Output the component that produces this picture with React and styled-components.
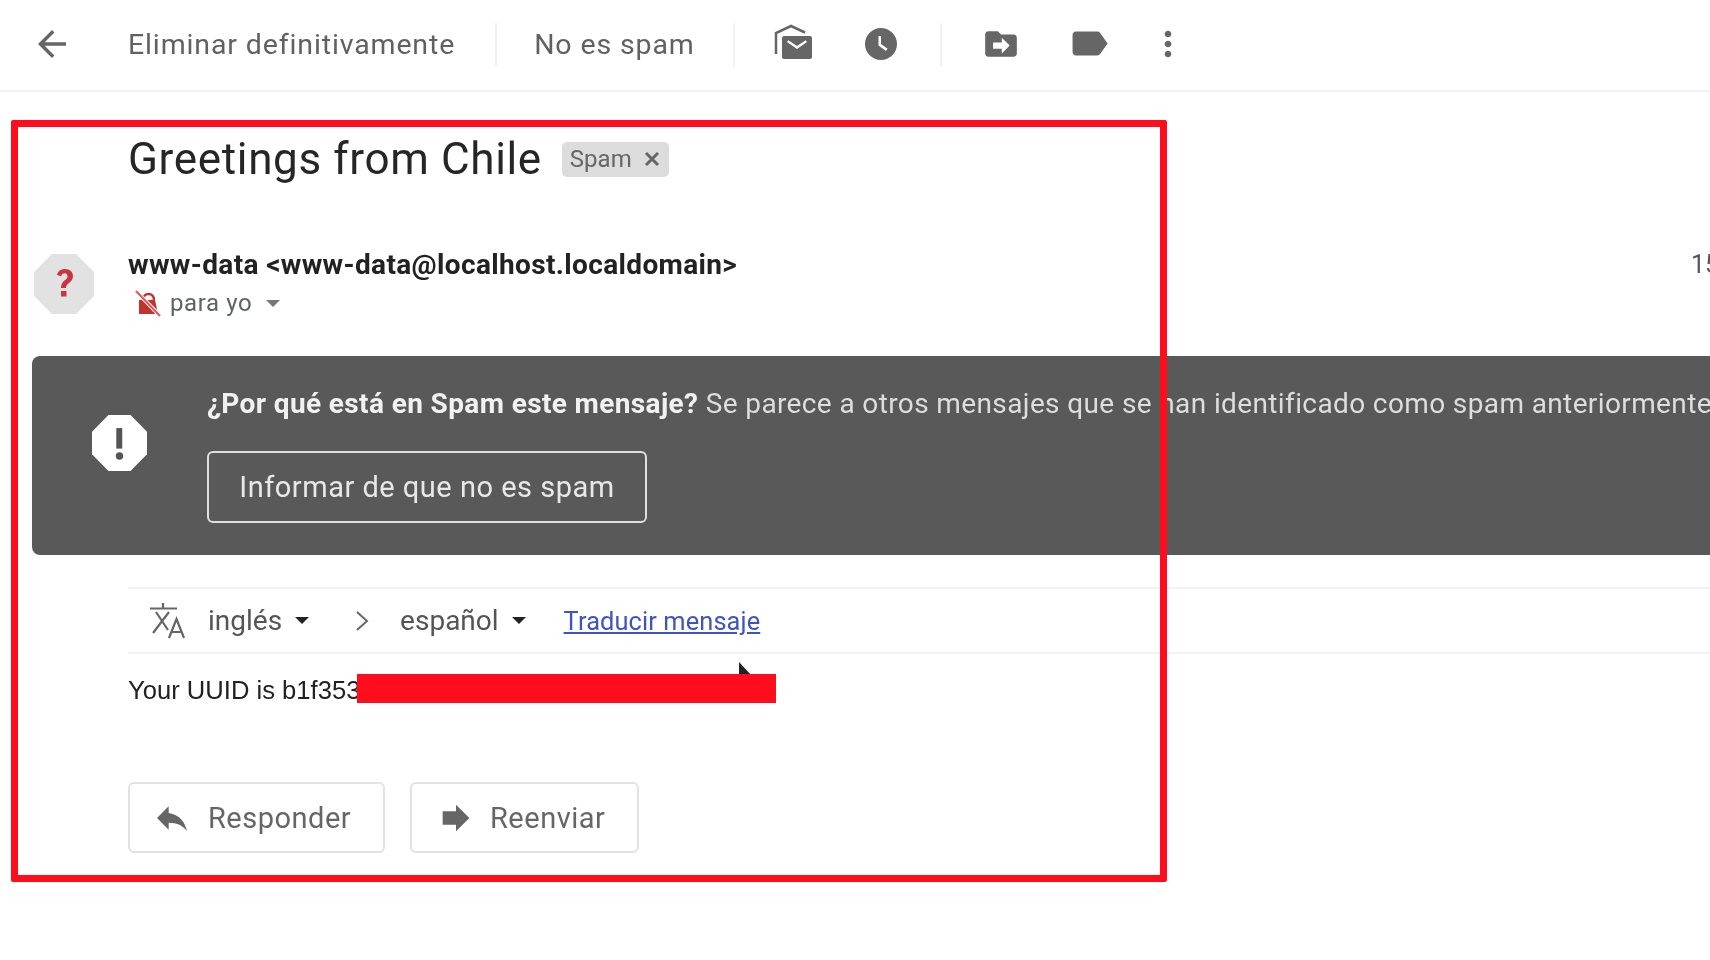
import React from 'react';
import styled, { createGlobalStyle } from 'styled-components';

const GlobalStyle = createGlobalStyle`
  html, body {
    margin: 0;
    padding: 0;
    background: #fff;
    font-family: Roboto, "Liberation Sans", sans-serif;
  }
`;

const Page = styled.div`
  position: relative;
  width: 1710px;
  height: 960px;
  overflow: hidden;
  background: #fff;
`;

const Blurred = styled.div`
  filter: blur(0.7px);
`;

const Toolbar = styled.div`
  display: flex;
  align-items: center;
  height: 90px;
  border-bottom: 2px solid #f1f1f1;
  padding-left: 31px;
  color: #666;
`;

const ToolIcon = styled.svg`
  flex: none;
  width: ${(p) => p.$size}px;
  height: ${(p) => p.$size}px;
  margin-left: ${(p) => p.$ml || 0}px;
  margin-bottom: 3px;
  fill: currentColor;
`;

const ToolText = styled.span`
  margin-left: ${(p) => p.$ml}px;
  margin-bottom: 2px;
  font-size: 28.5px;
  letter-spacing: 0.87px;
  white-space: nowrap;
  color: #616161;
`;

const ToolDivider = styled.span`
  flex: none;
  width: 2px;
  height: 44px;
  margin-left: ${(p) => p.$ml}px;
  background: #f2f2f2;
`;

const SubjectRow = styled.div`
  display: flex;
  align-items: center;
  height: 36px;
  margin-top: 49px;
  padding-left: 128px;
`;

const Subject = styled.h1`
  margin: 0;
  font-size: 44px;
  font-weight: 400;
  letter-spacing: 0.65px;
  color: #262626;
  white-space: nowrap;
`;

const Chip = styled.span`
  display: flex;
  align-items: center;
  height: 35px;
  margin-left: 20px;
  padding: 0 8px;
  gap: 11px;
  background: #dcdcdc;
  border-radius: 5px;
  font-size: 24px;
  color: #666;
`;

const ChipClose = styled.svg`
  width: 18px;
  height: 18px;
  stroke: #666;
  stroke-width: 3;
  fill: none;
`;

const SenderRow = styled.div`
  display: flex;
  margin-top: 69px;
  padding-left: 34px;
  width: 1800px;
`;

const Avatar = styled.svg`
  flex: none;
  width: 60px;
  height: 60px;
  margin-top: 8px;
`;

const SenderInfo = styled.div`
  flex: none;
  width: 1563px;
  margin-left: 34px;
`;

const SenderName = styled.div`
  font-size: 28px;
  line-height: 38px;
  font-weight: 700;
  letter-spacing: 0.36px;
  color: #222;
  white-space: nowrap;
`;

const Recipient = styled.div`
  display: flex;
  align-items: center;
  height: 38px;
  font-size: 24px;
  letter-spacing: 0.6px;
  color: #5f6368;
`;

const BellIcon = styled.svg`
  flex: none;
  width: 27px;
  height: 27px;
  margin: 0 8px 0 7px;
`;

const Caret = styled.span`
  width: 0;
  height: 0;
  margin-left: ${(p) => p.$ml}px;
  border-left: 7.5px solid transparent;
  border-right: 7.5px solid transparent;
  border-top: 7.5px solid ${(p) => p.$color};
`;

const DateText = styled.div`
  font-size: 25px;
  line-height: 38px;
  color: #555;
`;

const Banner = styled.div`
  display: flex;
  box-sizing: border-box;
  width: 1750px;
  height: 199px;
  margin: 34px 0 0 32px;
  padding: 28px 0 0 60px;
  background: #595959;
  border-radius: 8px 0 0 8px;
`;

const BannerBody = styled.div`
  margin-left: 60px;
  margin-top: 2px;
`;

const BannerIcon = styled.svg`
  flex: none;
  width: 55px;
  height: 56px;
  margin-top: 31px;
`;

const BannerText = styled.div`
  font-size: 28px;
  line-height: 36px;
  letter-spacing: 0.38px;
  color: #ddd;
  white-space: nowrap;

  b {
    font-weight: 700;
    color: #f1f1f1;
    letter-spacing: 0.38px;
  }
`;

const OutlineButton = styled.div`
  box-sizing: border-box;
  width: 440px;
  height: 72px;
  margin-top: 29px;
  border: 2px solid #e0e0e0;
  border-radius: 6px;
  font-size: 29px;
  line-height: 68px;
  text-align: center;
  letter-spacing: 0.5px;
  color: #e8e8e8;
`;

const TranslateBar = styled.div`
  display: flex;
  align-items: center;
  box-sizing: border-box;
  height: 67px;
  margin: 32px 0 0 128px;
  padding-left: 22px;
  border-top: 2px solid #f3f3f3;
  border-bottom: 2px solid #f3f3f3;
`;

const TranslateIcon = styled.svg`
  flex: none;
  width: 36px;
  height: 36px;
  fill: none;
  stroke: #666;
  stroke-width: 2.2;
`;

const LangText = styled.span`
  margin-left: ${(p) => p.$ml}px;
  font-size: 28px;
  color: #555;
`;

const Chevron = styled.svg`
  flex: none;
  width: 14px;
  height: 20px;
  margin-left: 46px;
  fill: none;
  stroke: #666;
  stroke-width: 2;
`;

const TranslateLink = styled.a`
  margin-left: 38px;
  font-size: 25.4px;
  letter-spacing: 0.1px;
  color: #3f55bd;
  text-decoration: underline;
`;

const BodyLine = styled.div`
  margin: 18px 0 0 128px;
  height: 36px;
  font-family: "Liberation Sans", Arial, sans-serif;
  font-size: 25.6px;
  line-height: 36px;
  color: #222;
`;

const Actions = styled.div`
  display: flex;
  gap: 25px;
  margin: 74px 0 0 128px;
`;

const ActionButton = styled.div`
  display: flex;
  align-items: center;
  box-sizing: border-box;
  width: ${(p) => p.$width}px;
  height: 71px;
  padding-left: ${(p) => p.$pad}px;
  border: 2px solid #e2e2e2;
  border-radius: 6px;
  font-size: 29px;
  letter-spacing: 0.5px;
  color: #666;
`;

const ActionIcon = styled.svg`
  flex: none;
  width: 40px;
  height: 40px;
  margin-right: ${(p) => p.$mr}px;
  fill: #666;
`;

/* overlays drawn on top of the screenshot */
const RedFrame = styled.div`
  position: absolute;
  left: 11px;
  top: 120px;
  width: 1156px;
  height: 762px;
  box-sizing: border-box;
  border: 7px solid #ff0d1d;
  border-radius: 2px;
`;

const Redaction = styled.div`
  position: absolute;
  left: 357px;
  top: 674px;
  width: 419px;
  height: 29px;
  background: #ff0d1d;
`;

const Cursor = styled.svg`
  position: absolute;
  left: 736px;
  top: 662px;
  width: 18px;
  height: 14px;
  fill: #222;
`;

const octagon = '18,0 42,0 60,18 60,42 42,60 18,60 0,42 0,18';

export default function App() {
  return (
    <Page>
      <GlobalStyle />
      <Blurred>
        <Toolbar>
          <ToolIcon $size={42} viewBox="0 0 24 24">
            <path d="M20 11H7.830l5.590-5.590L12 4l-8 8 8 8 1.410-1.410L7.830 13H20v-2z" />
          </ToolIcon>
          <ToolText $ml={55}>Eliminar definitivamente</ToolText>
          <ToolDivider $ml={40} />
          <ToolText $ml={37}>No es spam</ToolText>
          <ToolDivider $ml={38} />
          <ToolIcon $size={42} $ml={37} viewBox="0 0 42 42">
            <path d="M4 31V10L19 3l14 6.500" fill="none" stroke="currentColor" strokeWidth="2.500" />
            <path fill="#fff" d="M7 12h34v26H7z" />
            <path fillRule="evenodd" d="M12 13h26a2 2 0 0 1 2 2v19a2 2 0 0 1-2 2H12a2 2 0 0 1-2-2V15a2 2 0 0 1 2-2zm3 6 10 7 10-7-1.300-1.800L25 23l-8.700-5.800z" />
          </ToolIcon>
          <ToolIcon $size={34} $ml={50} viewBox="0 0 34 34">
            <path fillRule="evenodd" d="M17 1a16 16 0 1 1 0 32 16 16 0 0 1 0-32zm-2.500 8v9.500l7.500 5.500 1.600-2.200-6.600-4.800V9z" />
          </ToolIcon>
          <ToolDivider $ml={42} />
          <ToolIcon $size={38} $ml={40} viewBox="0 0 24 24">
            <path fillRule="evenodd" d="M20 6h-8l-2-2H4c-1.100 0-2 .9-2 2v12c0 1.100.9 2 2 2h16c1.100 0 2-.9 2-2V8c0-1.100-.9-2-2-2zm-7.500 12v-3H7v-4h5.500V8l5 5z" />
          </ToolIcon>
          <ToolIcon $size={41} $ml={50} viewBox="0 0 24 24">
            <path d="M17.630 5.840C17.270 5.330 16.670 5 16 5L3.500 5.010C2.400 5.010 1.500 5.900 1.500 7v10c0 1.100.9 1.990 2 1.990L16 19c.67 0 1.270-.33 1.630-.84L22 12l-4.370-6.160z" />
          </ToolIcon>
          <ToolIcon $size={40} $ml={37} viewBox="0 0 24 24">
            <path d="M12 8c1.100 0 2-.9 2-2s-.9-2-2-2-2 .9-2 2 .9 2 2 2zm0 2c-1.100 0-2 .9-2 2s.9 2 2 2 2-.9 2-2-.9-2-2-2zm0 6c-1.100 0-2 .9-2 2s.9 2 2 2 2-.9 2-2-.9-2-2-2z" />
          </ToolIcon>
        </Toolbar>

        <SubjectRow>
          <Subject>Greetings from Chile</Subject>
          <Chip>
            Spam
            <ChipClose viewBox="0 0 18 18">
              <path d="M3 3l12 12M15 3 3 15" />
            </ChipClose>
          </Chip>
        </SubjectRow>

        <SenderRow>
          <Avatar viewBox="0 0 60 60">
            <polygon points={octagon} fill="#e2e2e2" />
            <path d="M23 21c1-4 4-6 8-6 5 0 8 3 8 7 0 3-1.500 5-4 7-2 1.500-3 3-3 5h-5c0-3.500 1-5.500 3.500-7.500 2-1.500 3-2.700 3-4.300 0-1.800-1.200-3-3-3-1.700 0-2.800 1-3.400 3z" fill="#c8363f" />
            <rect x="27" y="37" width="5.500" height="5.500" fill="#c8363f" />
          </Avatar>
          <SenderInfo>
            <SenderName>www-data &lt;www-data@localhost.localdomain&gt;</SenderName>
            <Recipient>
              <BellIcon viewBox="0 0 27 27">
                <path d="M8 10C8 2 19 2 19 10" fill="none" stroke="#c0342f" strokeWidth="2.500" />
                <path d="M4 10h16l3 14H4z" fill="#c0342f" />
                <path d="M1 1l24 25" stroke="#fff" strokeWidth="4" />
                <path d="M1 1l24 25" stroke="#d8605c" strokeWidth="2.200" />
              </BellIcon>
              para yo
              <Caret $ml={14} $color="#777" />
            </Recipient>
          </SenderInfo>
          <DateText>15</DateText>
        </SenderRow>

        <Banner>
          <BannerIcon viewBox="0 0 60 60" preserveAspectRatio="none">
            <polygon points={octagon} fill="#fff" />
            <rect x="26.500" y="14" width="6.500" height="22" fill="#555" />
            <circle cx="30" cy="44" r="4" fill="#555" />
          </BannerIcon>
          <BannerBody>
            <BannerText>
              <b>¿Por qué está en Spam este mensaje?</b> Se parece a otros mensajes que se han identificado como spam anteriormente.
            </BannerText>
            <OutlineButton>Informar de que no es spam</OutlineButton>
          </BannerBody>
        </Banner>

        <TranslateBar>
          <TranslateIcon viewBox="0 0 36 36">
            <path d="M0 5.500h27M13 0v5.500M6 9l12 18M19 9 3 30" />
            <path d="M19 35 26.500 16 34 35M21.500 29h10" />
          </TranslateIcon>
          <LangText $ml={22}>inglés</LangText>
          <Caret $ml={13} $color="#222" />
          <Chevron viewBox="0 0 14 20">
            <path d="M2 1l10 9-10 9" />
          </Chevron>
          <LangText $ml={31}>español</LangText>
          <Caret $ml={13} $color="#222" />
          <TranslateLink>Traducir mensaje</TranslateLink>
        </TranslateBar>

        <BodyLine>Your UUID is b1f353</BodyLine>

        <Actions>
          <ActionButton $width={257} $pad={22}>
            <ActionIcon $mr={16} viewBox="0 0 24 24">
              <path d="M10 9V5l-7 7 7 7v-4.100c5 0 8.500 1.600 11 5.100-1-5-4-10-11-11z" />
            </ActionIcon>
            Responder
          </ActionButton>
          <ActionButton $width={229} $pad={24}>
            <ActionIcon $mr={14} viewBox="0 0 24 24">
              <path d="M12 8V4l8 8-8 8v-4H4V8z" />
            </ActionIcon>
            Reenviar
          </ActionButton>
        </Actions>
      </Blurred>

      <Cursor viewBox="0 0 18 14">
        <path d="M3 0l13 14H3z" />
      </Cursor>
      <Redaction />
      <RedFrame />
    </Page>
  );
}
